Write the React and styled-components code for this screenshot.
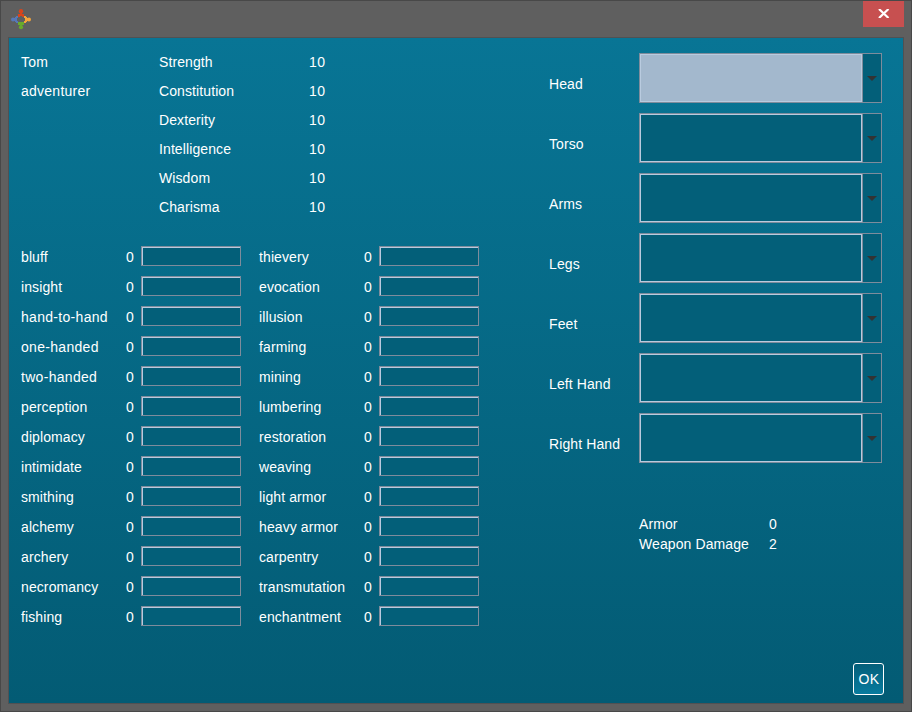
import React from "react";
import styled, { createGlobalStyle } from "styled-components";

const GlobalStyle = createGlobalStyle`
  * { box-sizing: border-box; }
  body {
    margin: 0;
    font: 14px/20px "Liberation Sans", Arial, sans-serif;
    letter-spacing: 0.1px;
    color: #fff;
  }
`;

const Window = styled.div`
  display: flex;
  flex-direction: column;
  width: 912px;
  height: 712px;
  padding: 0 7px 7px;
  background: #5f5f5f;
  border: 1px solid #484848;
`;

const TitleBar = styled.header`
  display: flex;
  justify-content: space-between;
  align-items: flex-start;
  flex: 0 0 36px;
  padding-left: 2px;
`;

const AppIcon = styled.svg`
  width: 21px;
  height: 21px;
  margin-top: 8px;
`;

const CloseButton = styled.button`
  display: flex;
  justify-content: center;
  width: 41px;
  height: 26px;
  padding: 8px 0 0;
  border: 0;
  background: #c75050;
`;

const Panel = styled.main`
  display: flex;
  flex: 1;
  border: 1px solid #505153;
  background: linear-gradient(#087595, #035b74);
`;

const StatsSide = styled.section`
  width: 539px;
  padding: 14px 0 0 12px;
`;

const Summary = styled.div`
  display: flex;
  height: 190px;
`;

const TextColumn = styled.div`
  display: flex;
  flex-direction: column;
  gap: 9px;
  width: ${(p) => p.$width}px;
  letter-spacing: ${(p) => p.$tracking || 0.1}px;
`;

const Skills = styled.div`
  display: grid;
  grid-template-columns: 238px 238px;
  grid-template-rows: repeat(13, 30px);
  grid-auto-flow: column;
`;

const SkillRow = styled.div`
  display: grid;
  grid-template-columns: 105px 15px 100px;
  align-items: start;
  height: 20px;
  padding-top: 4px;
`;

const SkillText = styled.span`
  padding-top: 1px;
  letter-spacing: ${(p) => (p.$wide ? 0.3 : 0.1)}px;
`;

const Progress = styled.div`
  height: 20px;
  background: #035f79;
  border: 1px solid #7e8c9c;
  box-shadow: inset 1px 1px #b9cadf;
`;

const EquipmentSide = styled.section`
  display: flex;
  flex: 1;
  flex-direction: column;
  align-items: flex-start;
  padding-top: 15px;
`;

const SlotList = styled.div`
  display: flex;
  flex-direction: column;
  gap: 10px;
`;

const Slot = styled.div`
  display: grid;
  grid-template-columns: 91px 243px;
  align-items: center;
  height: 50px;
`;

const SlotLabel = styled.span`
  padding: 11px 0 0 1px;
`;

const Combo = styled.div`
  display: flex;
  height: 50px;
  border: 1px solid #7e8c9c;
  background: #035f79;
`;

const ComboValue = styled.div`
  width: 222px;
  border: 1px solid #b9cbdf;
  background: ${(p) => (p.$selected ? "#a3b8cd" : "#035f79")};
`;

const ComboButton = styled.div`
  display: flex;
  flex: 1;
  padding: 22px 0 0 4px;
  border-left: 1px solid #7e8c9c;
`;

const ComboArrow = styled.svg`
  width: 10px;
  height: 5px;
`;

const Totals = styled.div`
  display: grid;
  grid-template-columns: 130px 30px;
  grid-auto-rows: 20px;
  margin: 51px 0 0 91px;
`;

const OkButton = styled.button`
  align-self: flex-end;
  width: 31px;
  height: 32px;
  margin: auto 19px 8px 0;
  padding: 0 0 0 1px;
  border: 1px solid #fff;
  border-radius: 3px;
  background: linear-gradient(#045f7a, #087b9e);
  color: #fff;
  font: inherit;
  letter-spacing: 0.3px;
`;

const attributes = ["Strength", "Constitution", "Dexterity", "Intelligence", "Wisdom", "Charisma"];
const skills = [
  "bluff", "insight", "hand-to-hand", "one-handed", "two-handed", "perception", "diplomacy",
  "intimidate", "smithing", "alchemy", "archery", "necromancy", "fishing",
  "thievery", "evocation", "illusion", "farming", "mining", "lumbering", "restoration",
  "weaving", "light armor", "heavy armor", "carpentry", "transmutation", "enchantment",
];
const slots = ["Head", "Torso", "Arms", "Legs", "Feet", "Left Hand", "Right Hand"];

function CommunityIcon() {
  return (
    <AppIcon viewBox="0 0 21 21">
      <path d="M6 9 9 6M13 6l3 3M16 12l-3 3M9 15l-3-3" stroke="#8b8790" fill="none" />
      <g fill="#d8451c"><circle cx="11" cy="2.2" r="2.2" /><path d="M10 4h2v1h2v3h-2V7h-2v1H8V5h2z" /></g>
      <g fill="#f4a43c"><circle cx="19" cy="10.5" r="2" /><path d="M14 7h2v1h1v1h1v3h-1v1h-1v1h-2v-2h1V9h-1z" /></g>
      <g fill="#5778b8"><circle cx="3" cy="10.5" r="2" /><path d="M4 9h1V8h1V7h2v2H7v3h1v2H6v-1H5v-1H4z" /></g>
      <g fill="#69aa2b"><circle cx="11" cy="18.2" r="2.1" /><path d="M8 13h6v3h-2v2h-2v-2H8z" /></g>
    </AppIcon>
  );
}

export default function App() {
  return (
    <>
      <GlobalStyle />
      <Window>
        <TitleBar>
          <CommunityIcon />
          <CloseButton aria-label="Close">
            <svg width="12" height="9" viewBox="0 0 12 9">
              <path d="M1 0 10.5 9M10.5 0 1 9" stroke="#fff" strokeWidth="2.2" />
            </svg>
          </CloseButton>
        </TitleBar>
        <Panel>
          <StatsSide>
            <Summary>
              <TextColumn $width={138} $tracking={0.25}><span>Tom</span><span>adventurer</span></TextColumn>
              <TextColumn $width={150}>{attributes.map((a) => <span key={a}>{a}</span>)}</TextColumn>
              <TextColumn $width={40} $tracking={0.4}>{attributes.map((a) => <span key={a}>10</span>)}</TextColumn>
            </Summary>
            <Skills>
              {skills.map((s) => (
                <SkillRow key={s}>
                  <SkillText $wide={s.includes("-")}>{s}</SkillText>
                  <SkillText>0</SkillText>
                  <Progress />
                </SkillRow>
              ))}
            </Skills>
          </StatsSide>
          <EquipmentSide>
            <SlotList>
              {slots.map((s, i) => (
                <Slot key={s}>
                  <SlotLabel>{s}</SlotLabel>
                  <Combo>
                    <ComboValue $selected={i === 0} />
                    <ComboButton>
                      <ComboArrow viewBox="0 0 10 5"><path d="M0 0h10L5 5z" fill="#333" /></ComboArrow>
                    </ComboButton>
                  </Combo>
                </Slot>
              ))}
            </SlotList>
            <Totals>
              <span>Armor</span><span>0</span>
              <span>Weapon Damage</span><span>2</span>
            </Totals>
            <OkButton>OK</OkButton>
          </EquipmentSide>
        </Panel>
      </Window>
    </>
  );
}
